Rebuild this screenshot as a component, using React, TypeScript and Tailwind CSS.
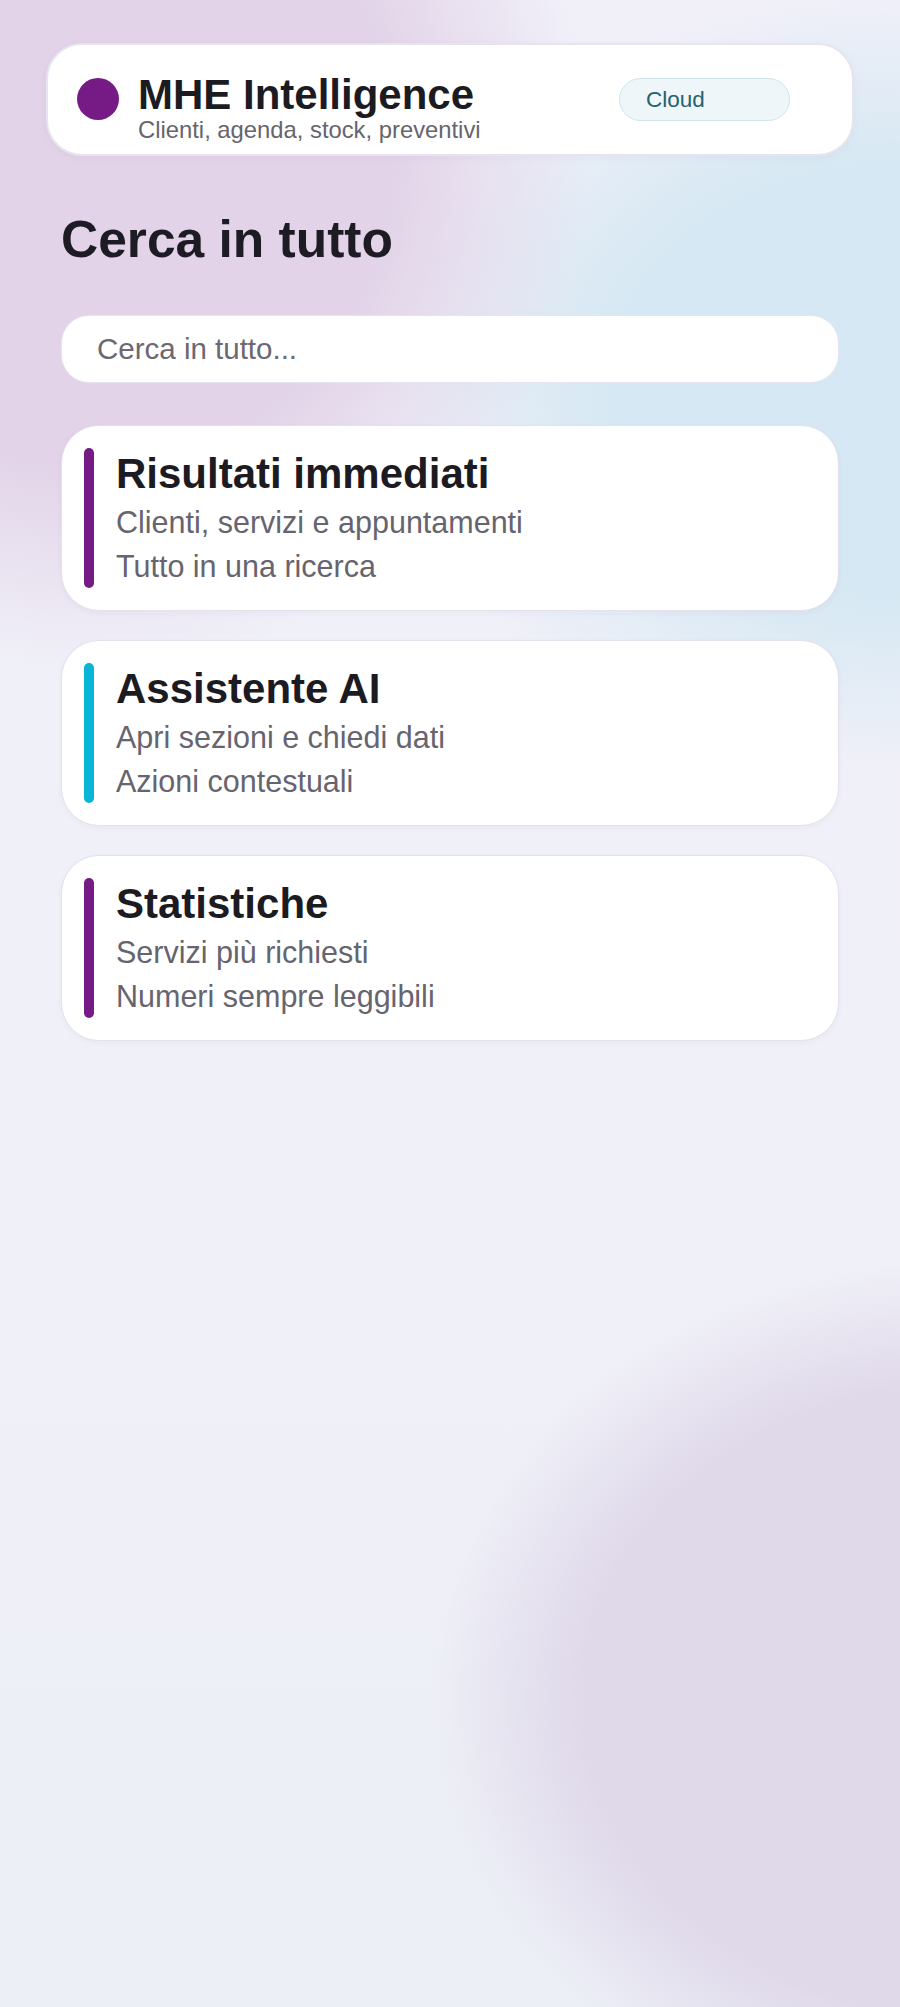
import React from "react";

interface Feature {
  title: string;
  lines: string[];
  accent: string;
}

const features: Feature[] = [
  {
    title: "Risultati immediati",
    lines: ["Clienti, servizi e appuntamenti", "Tutto in una ricerca"],
    accent: "bg-[#761b86]",
  },
  {
    title: "Assistente AI",
    lines: ["Apri sezioni e chiedi dati", "Azioni contestuali"],
    accent: "bg-[#08b5d6]",
  },
  {
    title: "Statistiche",
    lines: ["Servizi più richiesti", "Numeri sempre leggibili"],
    accent: "bg-[#761b86]",
  },
];

function FeatureCard({feature}: {feature: Feature}) {
  return (
    <div className="flex rounded-[38px] border border-[#e4e0ec] bg-white py-[22px] pl-[22px] shadow-[0_2px_6px_rgba(60,40,90,0.04)]">
      {/* Accent bar stretches with the text block */}
      <div className={`w-[10px] shrink-0 rounded-full ${feature.accent}`} />
      <div className="ml-[22px]">
        <div className="text-[42px] font-bold leading-[52px] text-[#1c1b22]">
          {feature.title}
        </div>
        {feature.lines.map((line) => (
          <div key={line} className="text-[30.5px] leading-[44px] text-[#66646e]">
            {line}
          </div>
        ))}
      </div>
    </div>
  );
}

export default function App() {
  return (
    <div className="min-h-[2007px] w-full bg-[#f0f0f8] bg-[radial-gradient(ellipse_500px_520px_at_90px_150px,#e2d3e8_60%,rgba(226,211,232,0)_100%),radial-gradient(ellipse_520px_390px_at_900px_380px,#d6e8f3_55%,rgba(214,232,243,0)_100%),radial-gradient(ellipse_540px_440px_at_970px_1700px,#e0d9ea_72%,rgba(224,217,234,0)_100%),linear-gradient(180deg,#f1f0f9_0%,#f0f0f8_60%,#eceff6_100%)] font-['Liberation_Sans',Arial,sans-serif]">
      {/* Header */}
      <div className="px-[46px] pt-[43px]">
        <div className="flex items-start rounded-[36px] border-2 border-[#e7e3ef] bg-white pb-[11px] pl-[29px] pr-[62px] pt-[29px] shadow-[0_2px_8px_rgba(60,40,90,0.04)]">
          <div className="mt-[4px] h-[42px] w-[42px] shrink-0 rounded-full bg-[#761b86]" />
          <div className="ml-[19px]">
            <div className="text-[42px] font-bold leading-[42px] text-[#1c1b22]">
              MHE Intelligence
            </div>
            <div className="text-[23.8px] leading-[27px] text-[#66646e]">
              Clienti, agenda, stock, preventivi
            </div>
          </div>
          <div className="ml-auto mt-[4px] flex h-[43px] w-[171px] items-center rounded-full border border-[#cfe5ec] bg-[#eef6f9] pl-[26px] text-[22.5px] text-[#27606f]">
            Cloud
          </div>
        </div>
      </div>

      <main className="px-[61px]">
        <h1 className="mt-[53px] text-[51.5px] font-bold leading-[61px] text-[#1d1b23]">
          Cerca in tutto
        </h1>

        <input
          type="text"
          placeholder="Cerca in tutto..."
          className="mt-[45px] block h-[68px] w-full rounded-[28px] border-[1.5px] border-[#e8e3ef] bg-white pl-[35px] text-[29.5px] text-[#1c1b22] outline-none placeholder:text-[#6b6872]"
        />

        <div className="mt-[42px] flex flex-col gap-[29px]">
          {features.map((feature) => (
            <FeatureCard key={feature.title} feature={feature} />
          ))}
        </div>
      </main>
    </div>
  );
}
